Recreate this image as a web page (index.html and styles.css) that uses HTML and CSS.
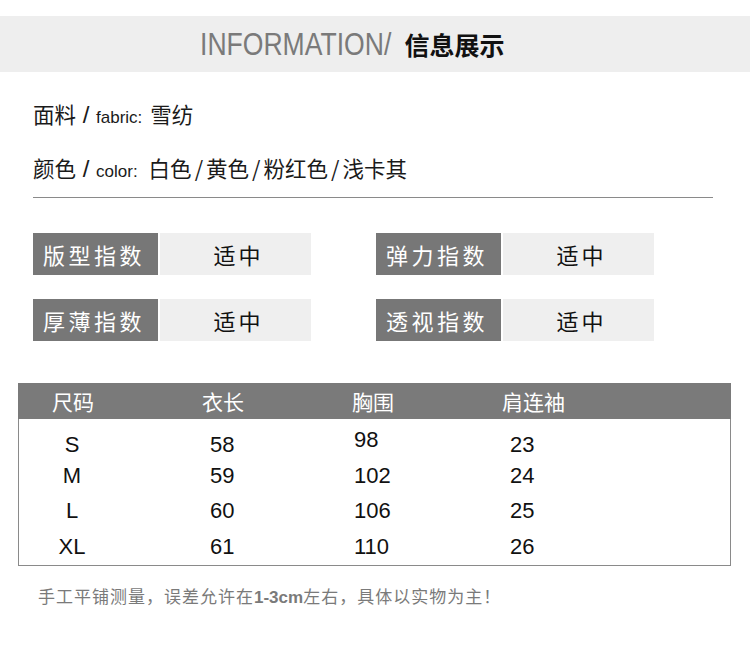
FILE: index.html
```html
<!DOCTYPE html>
<html lang="zh-CN">
<head>
<meta charset="utf-8">
<title>信息展示</title>
<link rel="stylesheet" href="styles.css">
</head>
<body>
<div class="band">
  <div class="title"><span class="title-en">INFORMATION/</span><span class="title-cn">信息展示</span></div>
</div>

<div class="info">
  <p class="line line-first"><span class="big">面料</span><span class="slash"> / </span><span class="small">fabric:</span><span class="big gap">雪纺</span></p>
  <p class="line"><span class="big">颜色</span><span class="slash"> / </span><span class="small">color:</span><span class="big gap2">白色<span class="sep">/</span>黄色<span class="sep">/</span>粉红色<span class="sep">/</span>浅卡其</span></p>
</div>

<div class="divider"></div>

<div class="indices">
  <div class="idx"><div class="lbl">版型指数</div><div class="val">适中</div></div>
  <div class="idx"><div class="lbl">弹力指数</div><div class="val">适中</div></div>
  <div class="idx"><div class="lbl">厚薄指数</div><div class="val">适中</div></div>
  <div class="idx"><div class="lbl">透视指数</div><div class="val">适中</div></div>
</div>

<div class="size-table">
  <div class="thead">
    <div class="th">尺码</div>
    <div class="th">衣长</div>
    <div class="th">胸围</div>
    <div class="th">肩连袖</div>
  </div>
  <div class="tbody">
    <div class="tr">
      <div class="td c1">S</div><div class="td c2">58</div><div class="td c3 raised">98</div><div class="td c4">23</div>
    </div>
    <div class="tr">
      <div class="td c1">M</div><div class="td c2">59</div><div class="td c3">102</div><div class="td c4">24</div>
    </div>
    <div class="tr">
      <div class="td c1">L</div><div class="td c2">60</div><div class="td c3">106</div><div class="td c4">25</div>
    </div>
    <div class="tr">
      <div class="td c1">XL</div><div class="td c2">61</div><div class="td c3">110</div><div class="td c4">26</div>
    </div>
  </div>
</div>

<p class="note">手工平铺测量，误差允许在<b>1-3cm</b>左右，具体以实物为主！</p>
</body>
</html>
```

FILE: styles.css
```css
* { box-sizing: border-box; }

html, body {
  margin: 0;
  padding: 0;
  background: #ffffff;
  font-family: "Liberation Sans", "Noto Sans CJK SC", sans-serif;
  color: #1a1a1a;
}

.band {
  margin-top: 16px;
  height: 56px;
  background: #eeeeee;
  display: flex;
  align-items: center;
  padding-left: 200px;
}

.title {
  display: flex;
  align-items: center;
  white-space: nowrap;
}

.title-en {
  display: inline-block;
  font-size: 32px;
  line-height: 40px;
  color: #7a7a7a;
  transform: scaleX(0.83);
  transform-origin: left center;
  margin-right: -26px;
}

.title-cn {
  font-family: "Noto Sans CJK SC", sans-serif;
  font-weight: 700;
  font-size: 25px;
  line-height: 40px;
  color: #111111;
}

.info {
  padding-left: 33px;
}

.line {
  margin: 0;
  height: 30px;
  line-height: 30px;
  white-space: nowrap;
  margin-top: 24px;
}

.line-first {
  margin-top: 27px;
}

.big {
  font-family: "Noto Sans CJK SC", sans-serif;
  font-size: 21.5px;
}

.slash {
  font-size: 24px;
}

.small {
  font-size: 17px;
}

.gap { margin-left: 8px; }
.gap2 { margin-left: 11px; }

.sep {
  margin: 0 3px;
}

.divider {
  margin: 14px 37px 0 33px;
  height: 1px;
  background: #8a8a8a;
}

.indices {
  display: grid;
  grid-template-columns: 278px 278px;
  column-gap: 65px;
  row-gap: 24px;
  padding-left: 33px;
  margin-top: 35px;
}

.idx {
  display: flex;
  gap: 2px;
  height: 42px;
}

.lbl {
  width: 125px;
  background: #777777;
  color: #ffffff;
  font-family: "Noto Sans CJK SC", sans-serif;
  font-size: 22px;
  letter-spacing: 3.5px;
  line-height: 42px;
  padding-left: 10px;
}

.val {
  width: 151px;
  background: #efefef;
  color: #111111;
  font-family: "Noto Sans CJK SC", sans-serif;
  font-size: 22px;
  letter-spacing: 3px;
  line-height: 42px;
  text-align: center;
  padding-left: 6px;
}

.size-table {
  margin: 42px 19px 0 18px;
}

.thead {
  height: 36px;
  background: #7a7a7a;
  display: grid;
  grid-template-columns: 150px 150px 150px 1fr;
  padding-left: 34px;
  align-items: center;
}

.th {
  color: #ffffff;
  font-family: "Noto Sans CJK SC", sans-serif;
  font-size: 21px;
  line-height: 34px;
}

.tbody {
  border: 1px solid #8a8a8a;
  border-top: none;
  padding: 3px 0 0 33px;
  height: 147px;
}

.tr {
  display: grid;
  grid-template-columns: 150px 150px 150px 1fr;
  height: 35.5px;
  align-items: center;
}

.td {
  font-size: 22px;
  line-height: 35px;
  color: #111111;
}

.c1 { width: 40px; text-align: center; }
.c2 { padding-left: 8px; }
.c3 { padding-left: 2px; }
.c4 { padding-left: 8px; }

.raised { padding-bottom: 10px; }

.note {
  margin: 20px 0 0 38px;
  font-size: 17px;
  line-height: 24px;
  letter-spacing: 1px;
  color: #7a7a7a;
  white-space: nowrap;
}

.note b {
  font-family: "Liberation Sans", sans-serif;
  font-weight: 700;
  letter-spacing: 0;
}
```
